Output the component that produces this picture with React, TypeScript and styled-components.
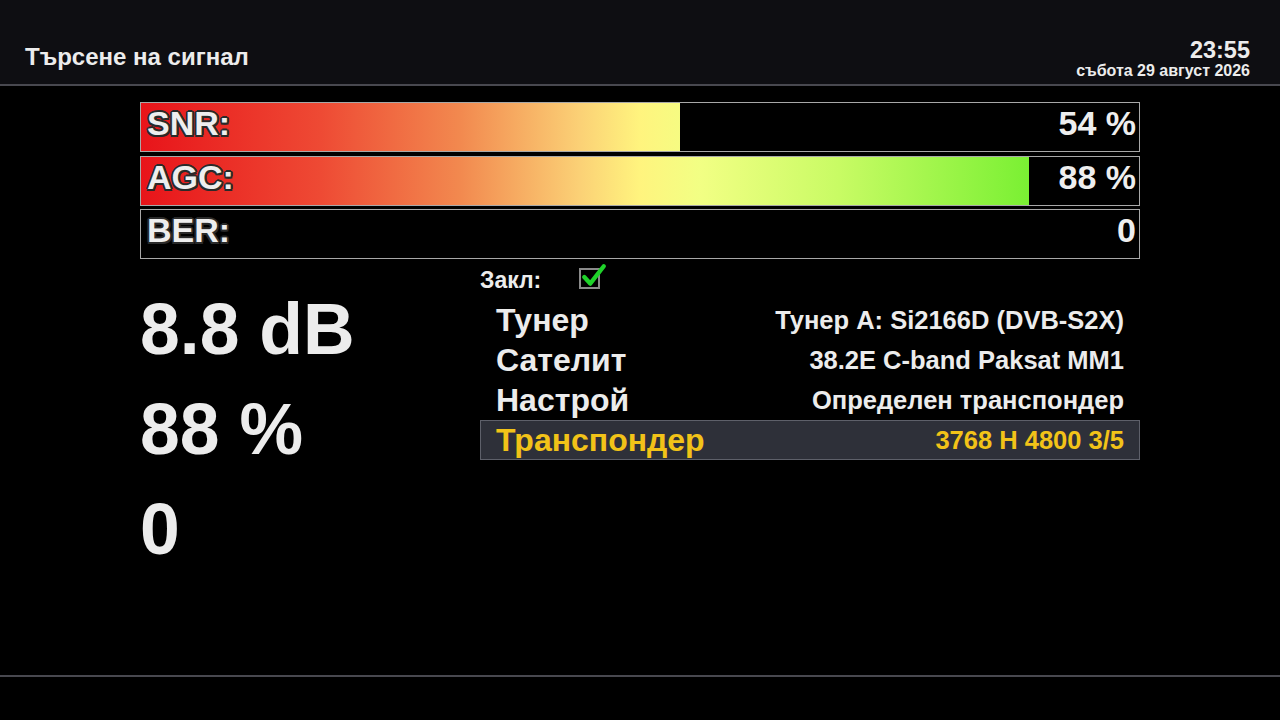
import React from "react";
import styled, { createGlobalStyle } from "styled-components";

const Global = createGlobalStyle`
  html, body { margin: 0; padding: 0; background: #000; }
  body { width: 1280px; height: 720px; overflow: hidden; font-family: "Liberation Sans", Arial, sans-serif; color: #ececec; }
`;

const Screen = styled.div`
  width: 1280px;
  height: 720px;
  background: #000;
  display: flex;
  flex-direction: column;
`;

const Header = styled.header`
  height: 84px;
  background: #0e0e12;
  border-bottom: 2px solid #48484f;
  display: flex;
  align-items: flex-end;
  justify-content: space-between;
  padding: 0 30px 0 25px;
  box-sizing: content-box;
`;

const Title = styled.h1`
  margin: 0 0 13px 0;
  font-size: 24px;
  line-height: 28px;
  font-weight: bold;
  color: #ececec;
`;

const Clock = styled.div`
  display: flex;
  flex-direction: column;
  align-items: flex-end;
  margin-bottom: 4px;
`;

const Time = styled.div`
  font-size: 23.5px;
  font-weight: bold;
  line-height: 24px;
`;

const DateText = styled.div`
  font-size: 16px;
  font-weight: bold;
  line-height: 18px;
`;

const Main = styled.main`
  flex: 1;
  width: 1000px;
  margin: 0 auto;
  padding-top: 16px;
  display: flex;
  flex-direction: column;
`;

const Bars = styled.div`
  display: flex;
  flex-direction: column;
  gap: 3.5px;
`;

const Bar = styled.div`
  position: relative;
  height: 50px;
  box-sizing: border-box;
  border: 1px solid #a8a8a8;
  background: #000;
  display: flex;
  align-items: center;
  justify-content: space-between;
  padding: 0 3px 7px 6px;
`;

const Fill = styled.div<{ $frac: number }>`
  position: absolute;
  left: 0;
  top: 0;
  bottom: 0;
  background: linear-gradient(
    90deg,
    #e8141a 0%,
    #ee4a34 18%,
    #f2894f 32%,
    #fbd176 44%,
    #fff47e 50%,
    #f2ff84 56%,
    #c8fb64 70%,
    #7af033 89%,
    #60ee20 100%
  );
  background-size: ${(p) => (100 / p.$frac).toFixed(3)}% 100%;
  background-repeat: no-repeat;
`;

const BarLabel = styled.span`
  position: relative;
  font-size: 34px;
  font-weight: bold;
  color: #eeeeee;
  text-shadow:
    -1.5px -1.5px 0 #2a2a2a, 1.5px -1.5px 0 #2a2a2a,
    -1.5px 1.5px 0 #2a2a2a, 1.5px 1.5px 0 #2a2a2a,
    0 2px 0 #2a2a2a, 0 -2px 0 #2a2a2a, 2px 0 0 #2a2a2a, -2px 0 0 #2a2a2a;
`;

const BarValue = styled.span`
  position: relative;
  font-size: 34px;
  font-weight: bold;
  color: #eeeeee;
`;

const Details = styled.section`
  display: flex;
  margin-top: 1px;
`;

const BigValues = styled.div`
  width: 340px;
  padding-top: 19px;
  display: flex;
  flex-direction: column;
`;

const BigValue = styled.div`
  font-size: 71.5px;
  font-weight: bold;
  line-height: 100px;
  height: 100px;
  color: #ececec;
`;

const InfoList = styled.div`
  flex: 1;
  display: flex;
  flex-direction: column;
`;

const LockRow = styled.div`
  height: 40px;
  display: flex;
  align-items: center;
  gap: 38px;
  font-size: 23px;
  font-weight: bold;
`;

const CheckBox = styled.span`
  position: relative;
  width: 21px;
  height: 21px;
  box-sizing: border-box;
  border: 2px solid #8a8a8a;
  display: inline-block;
  margin-top: -3px;
`;

const CheckSvg = styled.svg`
  position: absolute;
  left: 0px;
  top: -7px;
  width: 26px;
  height: 26px;
`;

const InfoRow = styled.div<{ $active?: boolean }>`
  height: 40px;
  box-sizing: border-box;
  display: flex;
  align-items: center;
  justify-content: space-between;
  padding: 0 15px 0 15px;
  background: ${(p) => (p.$active ? "#2e3039" : "transparent")};
  border: 1px solid ${(p) => (p.$active ? "#5e606a" : "transparent")};
  color: ${(p) => (p.$active ? "#f2c318" : "#ececec")};
`;

const RowLabel = styled.span`
  font-size: 32px;
  font-weight: bold;
`;

const RowValue = styled.span`
  font-size: 25.5px;
  font-weight: bold;
`;

const Footer = styled.footer`
  height: 43px;
  border-top: 2px solid #48484f;
`;

const bars = [
  { label: "SNR:", value: "54 %", frac: 0.54 },
  { label: "AGC:", value: "88 %", frac: 0.89 },
  { label: "BER:", value: "0", frac: 0 },
];

const rows = [
  { label: "Тунер", value: "Тунер A: Si2166D (DVB-S2X)" },
  { label: "Сателит", value: "38.2E C-band Paksat MM1" },
  { label: "Настрой", value: "Определен транспондер" },
  { label: "Транспондер", value: "3768 H 4800 3/5", active: true },
];

export default function App() {
  return (
    <Screen>
      <Global />
      <Header>
        <Title>Търсене на сигнал</Title>
        <Clock>
          <Time>23:55</Time>
          <DateText>събота 29 август 2026</DateText>
        </Clock>
      </Header>
      <Main>
        <Bars>
          {bars.map((b) => (
            <Bar key={b.label}>
              {b.frac > 0 && <Fill $frac={b.frac} style={{ width: `${b.frac * 100}%` }} />}
              <BarLabel>{b.label}</BarLabel>
              <BarValue>{b.value}</BarValue>
            </Bar>
          ))}
        </Bars>
        <Details>
          <BigValues>
            <BigValue>8.8 dB</BigValue>
            <BigValue>88 %</BigValue>
            <BigValue>0</BigValue>
          </BigValues>
          <InfoList>
            <LockRow>
              <span>Закл:</span>
              <CheckBox>
                <CheckSvg viewBox="0 0 24 24">
                  <path d="M3 13 L8.5 19 L21 3" fill="none" stroke="#1fd22a" strokeWidth="4" strokeLinecap="round" strokeLinejoin="round" />
                </CheckSvg>
              </CheckBox>
            </LockRow>
            {rows.map((r) => (
              <InfoRow key={r.label} $active={r.active}>
                <RowLabel>{r.label}</RowLabel>
                <RowValue>{r.value}</RowValue>
              </InfoRow>
            ))}
          </InfoList>
        </Details>
      </Main>
      <Footer />
    </Screen>
  );
}
